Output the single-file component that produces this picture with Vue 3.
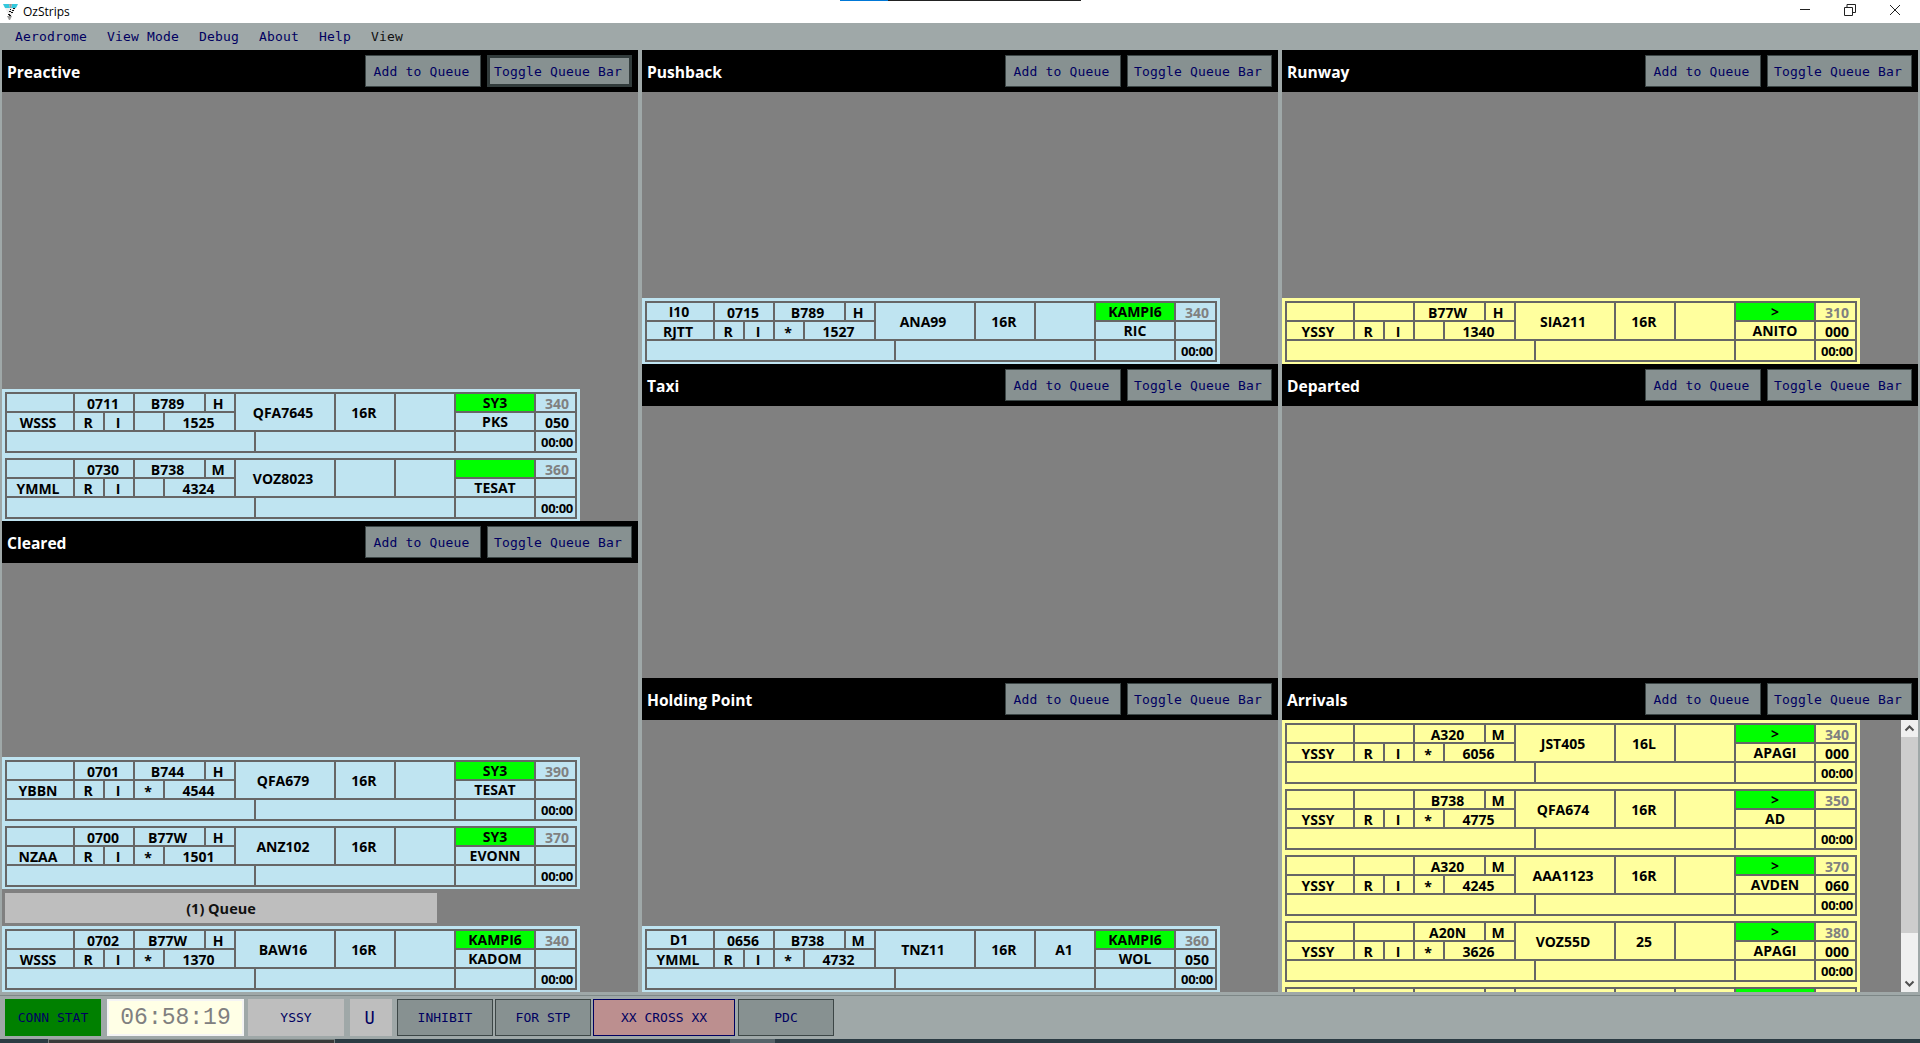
<script setup>
const base = { bay: '', time: '', type: '', wtc: '', dest: '', r: 'R', i: 'I', star: '', ssr: '', call: '', rwy: '', stand: '', sid: '', wpt: '', rfl: '', clx: '', timer: '00:00' };
const s = (o) => ({ ...base, ...o });

const preactive = [
  s({ time: '0711', type: 'B789', wtc: 'H', dest: 'WSSS', ssr: '1525', call: 'QFA7645', rwy: '16R', sid: 'SY3', wpt: 'PKS', rfl: '340', clx: '050' }),
  s({ time: '0730', type: 'B738', wtc: 'M', dest: 'YMML', ssr: '4324', call: 'VOZ8023', wpt: 'TESAT', rfl: '360' })
];
const cleared = [
  s({ time: '0701', type: 'B744', wtc: 'H', dest: 'YBBN', star: '*', ssr: '4544', call: 'QFA679', rwy: '16R', sid: 'SY3', wpt: 'TESAT', rfl: '390' }),
  s({ time: '0700', type: 'B77W', wtc: 'H', dest: 'NZAA', star: '*', ssr: '1501', call: 'ANZ102', rwy: '16R', sid: 'SY3', wpt: 'EVONN', rfl: '370' })
];
const clearedQueue = [
  s({ time: '0702', type: 'B77W', wtc: 'H', dest: 'WSSS', star: '*', ssr: '1370', call: 'BAW16', rwy: '16R', sid: 'KAMPI6', wpt: 'KADOM', rfl: '340' })
];
const pushback = [
  s({ bay: 'I10', time: '0715', type: 'B789', wtc: 'H', dest: 'RJTT', star: '*', ssr: '1527', call: 'ANA99', rwy: '16R', sid: 'KAMPI6', wpt: 'RIC', rfl: '340' })
];
const holding = [
  s({ bay: 'D1', time: '0656', type: 'B738', wtc: 'M', dest: 'YMML', star: '*', ssr: '4732', call: 'TNZ11', rwy: '16R', stand: 'A1', sid: 'KAMPI6', wpt: 'WOL', rfl: '360', clx: '050' })
];
const runway = [
  s({ type: 'B77W', wtc: 'H', dest: 'YSSY', ssr: '1340', call: 'SIA211', rwy: '16R', sid: '>', wpt: 'ANITO', rfl: '310', clx: '000' })
];
const arrivals = [
  s({ type: 'A320', wtc: 'M', dest: 'YSSY', star: '*', ssr: '6056', call: 'JST405', rwy: '16L', sid: '>', wpt: 'APAGI', rfl: '340', clx: '000' }),
  s({ type: 'B738', wtc: 'M', dest: 'YSSY', star: '*', ssr: '4775', call: 'QFA674', rwy: '16R', sid: '>', wpt: 'AD', rfl: '350' }),
  s({ type: 'A320', wtc: 'M', dest: 'YSSY', star: '*', ssr: '4245', call: 'AAA1123', rwy: '16R', sid: '>', wpt: 'AVDEN', rfl: '370', clx: '060' }),
  s({ type: 'A20N', wtc: 'M', dest: 'YSSY', star: '*', ssr: '3626', call: 'VOZ55D', rwy: '25', sid: '>', wpt: 'APAGI', rfl: '380', clx: '000' }),
  // only the top edge of this one shows above the bar
  s({ r: '', i: '', timer: '' })
];

const columns = [
  [
    { name: 'Preactive', strips: preactive, focus: true },
    { name: 'Cleared', strips: cleared, queue: '(1) Queue', queued: clearedQueue }
  ],
  [
    { name: 'Pushback', strips: pushback },
    { name: 'Taxi', strips: [] },
    { name: 'Holding Point', strips: holding }
  ],
  [
    { name: 'Runway', strips: runway, arr: true },
    { name: 'Departed', strips: [] },
    { name: 'Arrivals', strips: arrivals, arr: true, scroll: true }
  ]
];

const menus = ['Aerodrome', 'View Mode', 'Debug', 'About', 'Help', 'View'];
</script>

<template>
  <div class="app">
    <div class="progress"></div>
    <div class="titlebar">
      <svg class="logo" width="16" height="16" viewBox="0 0 16 16">
        <path d="M0 0h6l1 4H2zM9 0h6l-2 4H8z" fill="#35c8dc" />
        <path d="M6 0h3L8 4H7z" fill="#999" />
        <path d="M2 4h11L8 12H6z" fill="#eee" />
        <path d="M10 4h2v1h-2zM9 6h2v1H9zM8 8h2v1H8zM6 7h2v1H6zM5 10h2v1H5zM7 5h1v1H7zM6 12h2v-1H6z" fill="#111" />
        <path d="M4 12h5l-2 4H6z" fill="#999" />
      </svg>
      <span class="title">OzStrips</span>
      <div class="winctl">
        <svg width="12" height="12" viewBox="0 0 12 12"><path d="M1 5.500h10" stroke="#222" fill="none" /></svg>
        <svg width="12" height="12" viewBox="0 0 12 12"><path d="M.5 3.500h8v8h-8zM3 3.500V.5h8.500v8H8.500" stroke="#222" fill="none" /></svg>
        <svg width="12" height="12" viewBox="0 0 12 12"><path d="M1 1l10 10M11 1L1 11" stroke="#222" fill="none" /></svg>
      </div>
    </div>

    <div class="menu">
      <span v-for="(m, idx) in menus" :key="idx" class="menu-item" :class="{ last: idx === menus.length - 1 }">{{ m }}</span>
    </div>

    <div class="columns">
      <div v-for="(col, c) in columns" :key="c" class="column">
        <section v-for="panel in col" :key="panel.name" class="panel">
          <header class="panel-head">
            <span class="panel-name">{{ panel.name }}</span>
            <button class="btn add">Add to Queue</button>
            <button class="btn toggle" :class="{ focus: panel.focus }">Toggle Queue Bar</button>
          </header>
          <div class="panel-body" :class="{ top: panel.scroll }">
            <div class="strips">
              <template v-for="(group, g) in [panel.strips, panel.queued]" :key="g">
                <div v-if="g === 1 && panel.queue" class="queue">{{ panel.queue }}</div>
                <div v-for="st in group" :key="st.call + st.ssr" class="strip" :class="{ arr: panel.arr }">
                  <div class="grid">
                    <div class="cell bay">{{ st.bay }}</div>
                    <div class="cell low time">{{ st.time }}</div>
                    <div class="cell low type">{{ st.type }}</div>
                    <div class="cell low wtc">{{ st.wtc }}</div>
                    <div class="cell call">{{ st.call }}</div>
                    <div class="cell rwy">{{ st.rwy }}</div>
                    <div class="cell stand">{{ st.stand }}</div>
                    <div class="cell sid">{{ st.sid }}</div>
                    <div class="cell low rfl">{{ st.rfl }}</div>

                    <div class="cell low dest">{{ st.dest }}</div>
                    <div class="cell low">{{ st.r }}</div>
                    <div class="cell low">{{ st.i }}</div>
                    <div class="cell star">{{ st.star }}</div>
                    <div class="cell low ssr">{{ st.ssr }}</div>
                    <div class="cell wpt">{{ st.wpt }}</div>
                    <div class="cell low clx">{{ st.clx }}</div>

                    <div class="cell r3a"></div>
                    <div class="cell r3b"></div>
                    <div class="cell r3c"></div>
                    <div class="cell timer">{{ st.timer }}</div>
                  </div>
                </div>
              </template>
            </div>
            <div v-if="panel.scroll" class="scrollbar">
              <svg width="17" height="17" viewBox="0 0 17 17"><path d="M4.500 10.500l4-4 4 4" stroke="#505050" stroke-width="2" fill="none" /></svg>
              <div class="track"><div class="thumb"></div></div>
              <svg width="17" height="17" viewBox="0 0 17 17"><path d="M4.500 6.500l4 4 4-4" stroke="#505050" stroke-width="2" fill="none" /></svg>
            </div>
          </div>
        </section>
      </div>
    </div>

    <div class="bar">
      <div class="bar-inner">
        <div class="tile conn">CONN STAT</div>
        <div class="tile clock">06:58:19</div>
        <div class="tile ad">YSSY</div>
        <div class="tile u">U</div>
        <div class="tile act inhibit">INHIBIT</div>
        <div class="tile act stp">FOR STP</div>
        <div class="tile act cross">XX CROSS XX</div>
        <div class="tile act pdc">PDC</div>
      </div>
    </div>

    <div class="taskbar">
      <div class="task-a"></div>
      <div class="task-b"></div>
    </div>
  </div>
</template>

<style>
html, body {
  margin: 0;
  background: #9fa8a8;
}
</style>

<style scoped>
.app {
  position: relative;
  width: 1920px;
  height: 1043px;
  overflow: hidden;
  display: flex;
  flex-direction: column;
  background: #9fa8a8;
  font-family: "Open Sans", "Noto Sans", sans-serif;
}

.progress {
  position: absolute;
  top: 0;
  left: 840px;
  width: 241px;
  height: 1px;
  background: linear-gradient(to right, #0078d7 48px, #222 48px);
}

.titlebar {
  height: 23px;
  flex: none;
  background: #fff;
  display: flex;
  align-items: center;
}

.logo {
  margin-left: 3px;
  margin-top: 1px;
}

.title {
  margin-left: 4px;
  font-size: 12px;
  color: #000;
}

.winctl {
  margin-left: auto;
  margin-right: 19px;
  display: flex;
  gap: 33px;
  margin-top: -3px;
}

.menu {
  height: 27px;
  flex: none;
  display: flex;
  align-items: center;
  padding-left: 5px;
  font-family: "DejaVu Sans Mono", "Liberation Mono", monospace;
  font-size: 13px;
  letter-spacing: 0.17px;
  color: #000060;
}

.menu-item {
  padding: 0 10px;
}

.menu-item.last {
  color: #101010;
}

.columns {
  height: 942px;
  flex: none;
  display: grid;
  grid-template-columns: repeat(3, 636px);
  gap: 4px;
  padding-left: 2px;
}

.column {
  display: flex;
  flex-direction: column;
  min-height: 0;
}

.panel {
  flex: 1 1 0;
  min-height: 0;
  display: flex;
  flex-direction: column;
}

.panel-head {
  height: 42px;
  flex: none;
  box-sizing: border-box;
  background: #000;
  display: flex;
  align-items: center;
  gap: 6px;
  padding: 0 6px 0 5px;
}

.panel-name {
  margin-right: auto;
  padding-top: 2px;
  color: #fff;
  font-weight: 700;
  font-size: 15.6px;
}

.btn {
  height: 32px;
  box-sizing: border-box;
  padding: 0 3px 0 0;
  background: #879191;
  border: 1px solid #3c4646;
  color: #000060;
  font-family: "DejaVu Sans Mono", "Liberation Mono", monospace;
  font-size: 13px;
  letter-spacing: 0.17px;
}

.btn.add {
  width: 116px;
}

.btn.toggle {
  width: 145px;
}

.btn.focus {
  border: 3px solid #323c3c;
}

.panel-body {
  flex: 1;
  min-height: 0;
  background: #808080;
  display: flex;
  align-items: flex-end;
  overflow: hidden;
}

.panel-body.top {
  align-items: flex-start;
}

.strips {
  flex: 1;
  min-width: 0;
}

.queue {
  width: 432px;
  height: 30px;
  margin: 4px 0 3px 3px;
  padding-top: 1px;
  box-sizing: border-box;
  background: #bebebe;
  display: flex;
  align-items: center;
  justify-content: center;
  font-size: 14.5px;
  font-weight: 700;
  color: #111;
}

.strip {
  width: 578px;
  height: 66px;
  box-sizing: border-box;
  padding: 3px 3px 2px;
  background: #bfe4f1;
  --cell: #bfe4f1;
}

.strip.arr {
  background: #ffff9e;
  --cell: #ffff9e;
}

.grid {
  display: grid;
  grid-template-columns: 66px 28px 28px 28px 39px 28px 18px 78px 58px 58px 78px 39px;
  grid-template-rows: 17px 17px 19px;
  gap: 2px;
  padding: 2px;
  width: 572px;
  height: 61px;
  box-sizing: border-box;
  background: #666;
}

.cell {
  box-sizing: border-box;
  background: var(--cell);
  color: #000;
  font-size: 14px;
  font-weight: 700;
  line-height: 16px;
  padding: 1px 2px 0 0;
  display: flex;
  align-items: center;
  justify-content: center;
  white-space: nowrap;
}

.cell.low {
  padding-top: 3px;
  line-height: 14px;
}

.type, .wtc, .call, .dest {
  padding-right: 4px;
}

.time {
  grid-column: 2 / 4;
}

.type {
  grid-column: 4 / 6;
}

.call {
  grid-column: 7 / 9;
  grid-row: 1 / 3;
}

.rwy {
  grid-column: 9;
  grid-row: 1 / 3;
}

.stand {
  grid-column: 10;
  grid-row: 1 / 3;
}

.star {
  padding-top: 5px;
  line-height: 12px;
}

.ssr {
  grid-column: 5 / 7;
}

.sid {
  grid-column: 11;
  background: #00ff00;
  padding-right: 0;
}

.cell.rfl {
  grid-column: 12;
  color: #808080;
  padding-left: 3px;
  padding-right: 0;
}

.wpt {
  grid-column: 11;
  grid-row: 2;
  padding: 0;
}

.cell.clx {
  grid-column: 12;
  grid-row: 2;
  padding-left: 3px;
  padding-right: 0;
}

.r3a {
  grid-column: 1 / 8;
}

.r3b {
  grid-column: 8 / 11;
}

.r3c {
  grid-column: 11;
}

.timer {
  grid-column: 12;
  font-size: 13px;
  letter-spacing: -0.3px;
  padding-left: 3px;
  padding-right: 0;
}

.scrollbar {
  width: 17px;
  height: 100%;
  flex: none;
  background: #f0f0f0;
  display: flex;
  flex-direction: column;
}

.track {
  flex: 1;
  min-height: 0;
}

.thumb {
  height: 196px;
  background: #cdcdcd;
}

.bar {
  height: 47px;
  flex: none;
  box-sizing: border-box;
  padding-top: 3px;
}

.bar-inner {
  display: flex;
  box-sizing: border-box;
  height: 44px;
  border-top: 1px solid #7d8787;
  padding: 3px 0 0 5px;
  font-family: "DejaVu Sans Mono", "Liberation Mono", monospace;
  font-size: 13px;
  color: #000060;
}

.tile {
  height: 37px;
  box-sizing: border-box;
  display: flex;
  align-items: center;
  justify-content: center;
}

.conn {
  width: 96px;
  background: #008000;
}

.clock {
  width: 137px;
  margin-left: 6px;
  background: #ffffe6;
  border: 2px solid #f4f4f4;
  font-family: "Liberation Mono", monospace;
  font-size: 23px;
  color: #808080;
}

.ad {
  width: 96px;
  margin-left: 4px;
  background: #bebebe;
}

.u {
  width: 42px;
  margin-left: 6px;
  padding-right: 3px;
  background: #bebebe;
  font-size: 17px;
}

.act {
  width: 96px;
  margin-left: 2px;
  background: #879191;
  border: 1px solid #3c4646;
}

.inhibit {
  margin-left: 5px;
}

.cross {
  width: 142px;
  background: #bc8f8f;
  border-color: #000060;
}

.pdc {
  margin-left: 3px;
}

.taskbar {
  height: 4px;
  flex: none;
  position: relative;
  background: #2b3b43;
}

.task-a {
  position: absolute;
  left: 48px;
  top: 0;
  width: 287px;
  height: 4px;
  box-sizing: border-box;
  border: 1px solid #77807f;
  border-bottom: 0;
  background: #3a3a3a;
}

.task-b {
  position: absolute;
  left: 730px;
  top: 0;
  width: 45px;
  height: 4px;
  background: #566369;
}
</style>
